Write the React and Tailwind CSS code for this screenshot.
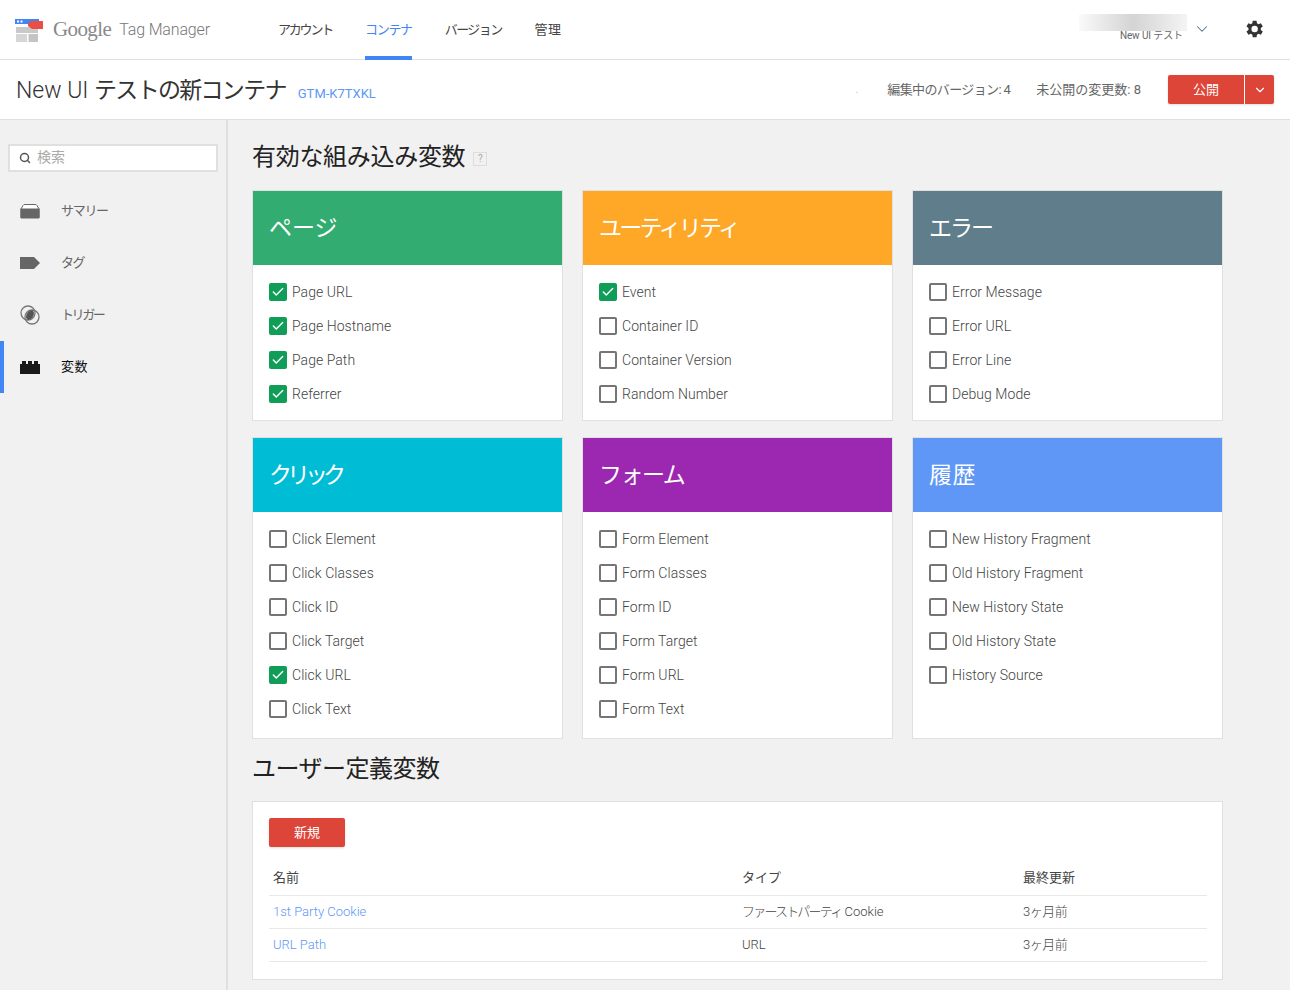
import React from "react";
import { Check, ChevronDown, Search } from "lucide-react";

const CARDS = [
  {
    title: "ページ",
    color: "bg-[#33ac71]",
    spacing: "tracking-[0px]",
    items: [
      ["Page URL", true],
      ["Page Hostname", true],
      ["Page Path", true],
      ["Referrer", true],
    ],
  },
  {
    title: "ユーティリティ",
    color: "bg-[#ffa726]",
    spacing: "tracking-[-2.700px]",
    items: [
      ["Event", true],
      ["Container ID", false],
      ["Container Version", false],
      ["Random Number", false],
    ],
  },
  {
    title: "エラー",
    color: "bg-[#607d8b]",
    spacing: "tracking-[-2px]",
    items: [
      ["Error Message", false],
      ["Error URL", false],
      ["Error Line", false],
      ["Debug Mode", false],
    ],
  },
  {
    title: "クリック",
    color: "bg-[#00bcd4]",
    spacing: "tracking-[-5px]",
    items: [
      ["Click Element", false],
      ["Click Classes", false],
      ["Click ID", false],
      ["Click Target", false],
      ["Click URL", true],
      ["Click Text", false],
    ],
  },
  {
    title: "フォーム",
    color: "bg-[#9c27b0]",
    spacing: "tracking-[-1.500px]",
    items: [
      ["Form Element", false],
      ["Form Classes", false],
      ["Form ID", false],
      ["Form Target", false],
      ["Form URL", false],
      ["Form Text", false],
    ],
  },
  {
    title: "履歴",
    color: "bg-[#5e97f6]",
    spacing: "tracking-[0.5px]",
    items: [
      ["New History Fragment", false],
      ["Old History Fragment", false],
      ["New History State", false],
      ["Old History State", false],
      ["History Source", false],
    ],
  },
];

const NAV = [
  { label: "アカウント", spacing: "tracking-[-2.200px]" },
  { label: "コンテナ", spacing: "tracking-[-1.300px]", active: true },
  { label: "バージョン", spacing: "tracking-[-1.600px]" },
  { label: "管理", spacing: "tracking-[0.500px]" },
];

function Logo() {
  return (
    <svg width="32" height="24" viewBox="0 0 32 24">
      <rect x="1" y="1" width="24" height="5" fill="#4285f4" />
      <rect x="3" y="2.5" width="2" height="2" fill="#fff" />
      <rect x="6.5" y="2.5" width="2" height="2" fill="#fff" />
      <rect x="2" y="9" width="22" height="6" fill="#c9c9c9" />
      <rect x="2" y="16" width="11" height="8" fill="#d6d6d6" />
      <rect x="14.5" y="16" width="9.5" height="8" fill="#c4c4c4" />
      <path d="M14 5 L17 2 H29 V10 H18 L14 7 Z" fill="#ea4f45" transform="translate(0 1)" />
    </svg>
  );
}

function Gear() {
  return (
    <svg width="22" height="22" viewBox="0 0 24 24" fill="#333">
      <path d="M19.4 13a7.6 7.6 0 0 0 0-2l2.2-1.7-2.1-3.6-2.6 1a7.6 7.6 0 0 0-1.7-1L14.8 2.9h-4.2L10.200 5.700a7.600 7.600 0 0 0-1.700 1l-2.600-1-2.100 3.600L6 11a7.600 7.600 0 0 0 0 2l-2.200 1.700 2.100 3.600 2.600-1a7.600 7.600 0 0 0 1.700 1l.4 2.800h4.200l.4-2.800a7.600 7.600 0 0 0 1.700-1l2.600 1 2.100-3.600zM12.700 15.500a3.500 3.500 0 1 1 0-7 3.500 3.500 0 0 1 0 7z" />
    </svg>
  );
}

const SIDE_ICONS = {
  summary: (
    <svg width="20" height="16" viewBox="0 0 20 16">
      <path d="M1 6 L3 2.500 Q3.500 1.500 5 1.500 H15 Q16.500 1.500 17 2.500 L19 6 V15 H1 Z" fill="#fff" stroke="#666" strokeWidth="1" />
      <rect x="0.500" y="5.500" width="19" height="9.500" fill="#666" />
    </svg>
  ),
  tag: (
    <svg width="20" height="14" viewBox="0 0 20 14">
      <path d="M0 1 H14 L20 7 L14 13 H0 Z" fill="#666" />
    </svg>
  ),
  trigger: (
    <svg width="20" height="20" viewBox="0 0 20 20">
      <circle cx="8" cy="8" r="7" fill="none" stroke="#777" strokeWidth="1.300" />
      <circle cx="12" cy="12" r="7" fill="none" stroke="#777" strokeWidth="1.300" />
      <path d="M6 12.500 A7 7 0 0 1 12.500 5 A7 7 0 0 1 14 8 A7 7 0 0 1 8 15 A7 7 0 0 1 6 12.500 Z" fill="#555" />
    </svg>
  ),
  variable: (
    <svg width="20" height="13" viewBox="0 0 20 13">
      <path d="M0 3 H2 V0 H6 V3 H8 V0 H12 V3 H14 V0 H18 V3 H20 V13 H0 Z" fill="#1a1a1a" />
    </svg>
  ),
};

function SideItem({ icon, label, spacing, active }) {
  return (
    <div className={`relative flex h-[52px] items-center pl-5 ${active ? "text-[#111]" : "text-[#666]"}`}>
      {active && <div className="absolute left-0 top-0 h-full w-1 bg-[#4285f4]" />}
      <div className="flex w-[41px] items-center">{SIDE_ICONS[icon]}</div>
      <span className={`text-[13px] ${spacing}`}>{label}</span>
    </div>
  );
}

function Row({ label, checked }) {
  return (
    <div className="flex h-[34px] items-center">
      {checked ? (
        <div className="flex h-[18px] w-[18px] items-center justify-center rounded-[2px] bg-[#0f9d58]">
          <Check size={14} strokeWidth={2.5} className="text-white" />
        </div>
      ) : (
        <div className="h-[18px] w-[18px] rounded-[2px] border-2 border-[#757575]" />
      )}
      <span className="ml-[5px] text-[14px] font-light tracking-[0.05px] text-[#444]">{label}</span>
    </div>
  );
}

function VarCard({ card, tall }) {
  return (
    <div className="border border-[#e0e0e0] bg-white">
      <div className={`flex h-[74px] items-center px-4 pt-[2px] text-[23px] text-white ${card.color} ${card.spacing}`}>
        {card.title}
      </div>
      <div className={`px-4 pt-[10px] ${tall ? "pb-[12px]" : "pb-[9px]"}`}>
        {card.items.map(([label, checked]) => (
          <Row key={label} label={label} checked={checked} />
        ))}
      </div>
    </div>
  );
}

export default function App() {
  return (
    <div className="flex h-[990px] flex-col overflow-hidden bg-[#f1f1f1] font-['Roboto','Noto_Sans_CJK_JP',sans-serif]">
      {/* Top nav */}
      <div className="flex h-[60px] items-stretch border-b border-[#e0e0e0] bg-white">
        <div className="flex w-[278px] items-center pl-[14px]">
          <Logo />
          <span className="ml-[7px] font-['Liberation_Serif',serif] text-[21px] tracking-[-0.6px] text-[#8a8a8a]">Google</span>
          <span className="ml-2 text-[16px] font-light tracking-[-0.15px] text-[#777]">Tag Manager</span>
        </div>
        <div className="-mb-px flex gap-[33px]">
          {NAV.map((n) => (
            <div
              key={n.label}
              className={`flex items-center border-b-4 pt-1 text-[13px] ${n.spacing} ${
                n.active ? "border-[#4285f4] text-[#4285f4]" : "border-transparent text-[#444]"
              }`}
            >
              {n.label}
            </div>
          ))}
        </div>
        <div className="ml-auto flex items-start">
          <div className="mt-[14px] flex w-[108px] flex-col">
            <div className="h-[17px] bg-gradient-to-r from-[#fafafa] via-[#d4d4d4] to-[#f4f4f4]" />
            <div className="-mt-[2px] pr-[4px] text-right text-[10px] leading-[14px] tracking-[-0.1px] text-[#666]">New UI テスト</div>
          </div>
          <ChevronDown size={18} strokeWidth={1.4} className="ml-[6px] mt-[20px] text-[#4f6f8a]" />
          <div className="ml-[32px] mr-[25px] mt-[18px]">
            <Gear />
          </div>
        </div>
      </div>

      {/* Container bar */}
      <div className="flex h-[60px] items-center border-b border-[#e0e0e0] bg-white pl-4 pr-4">
        <span className="mt-1 text-[23px] font-light text-[#333]">
          New UI <span className="font-normal tracking-[-1.700px]">テストの新コンテナ</span>
        </span>
        <span className="ml-3 mt-2 text-[13px] text-[#5e97f6]">GTM-K7TXKL</span>
        <div className="ml-auto flex items-center text-[13px] text-[#666]">
          <span className="mr-[29px] text-[10px] leading-none text-[#bbb]">.</span>
          <span className="tracking-[-0.62px]">編集中のバージョン: 4</span>
          <span className="ml-[26px]">未公開の変更数: 8</span>
          <div className="ml-[27px] flex h-[29px] overflow-hidden rounded-[2px] bg-[#dd4539] text-white shadow-sm">
            <div className="flex w-[76px] items-center justify-center text-[13px]">公開</div>
            <div className="flex w-[30px] items-center justify-center border-l border-white">
              <ChevronDown size={14} />
            </div>
          </div>
        </div>
      </div>

      <div className="flex flex-1">
        {/* Sidebar */}
        <div className="w-[228px] shrink-0 border-r-2 border-[#e0e0e0]">
          <div className="mx-2 mt-[24px] flex h-[28px] w-[210px] items-center border-2 border-[#e0e0e0] bg-white pl-[9px]">
            <Search size={12} strokeWidth={3} className="text-[#555]" />
            <span className="ml-[6px] -mt-[2px] text-[14px] text-[#aaa]">検索</span>
          </div>
          <div className="mt-[13px]">
            <SideItem icon="summary" label="サマリー" spacing="tracking-[-1.300px]" />
            <SideItem icon="tag" label="タグ" spacing="tracking-[-1.500px]" />
            <SideItem icon="trigger" label="トリガー" spacing="tracking-[-2.400px]" />
            <SideItem icon="variable" label="変数" spacing="tracking-[0.500px]" active />
          </div>
        </div>

        {/* Main */}
        <div className="w-[995px] pl-6">
          <div className="flex h-[70px] items-center pt-1">
            <h1 className="text-[24px] font-normal tracking-[-0.3px] text-[#222]">有効な組み込み変数</h1>
            <span className="ml-2 mt-1 flex h-[14px] w-[14px] items-center justify-center border border-[#ddd] text-[10px] leading-none text-[#aaa]">?</span>
          </div>
          <div className="grid grid-cols-3 gap-x-[19px] gap-y-4">
            {CARDS.map((c, i) => (
              <VarCard key={c.title} card={c} tall={i > 2} />
            ))}
          </div>
          <h2 className="flex h-[62px] items-center pb-[2px] text-[24px] font-normal tracking-[-0.5px] text-[#222]">ユーザー定義変数</h2>
          <div className="border border-[#e0e0e0] bg-white pb-[17px] pl-4 pr-[15px] pt-4">
            <button className="h-[29px] w-[76px] rounded-[2px] bg-[#dd4539] text-[13px] text-white shadow-sm">新規</button>
            <table className="mt-[14px] w-full text-[13px] text-[#444]">
              <thead>
                <tr className="h-[34px] border-b border-[#e8e8e8] text-left">
                  <th className="w-[473px] pl-1 font-normal">名前</th>
                  <th className="w-[281px] font-normal">タイプ</th>
                  <th className="font-normal">最終更新</th>
                </tr>
              </thead>
              <tbody>
                <tr className="h-[33px] border-b border-[#e8e8e8]">
                  <td className="pl-1 font-light text-[#5e97f6]">1st Party Cookie</td>
                  <td className="font-light">
                    <span className="tracking-[-1.800px]">ファーストパーティ</span> Cookie
                  </td>
                  <td className="font-light tracking-[-0.5px]">3ヶ月前</td>
                </tr>
                <tr className="h-[33px] border-b border-[#e8e8e8]">
                  <td className="pl-1 font-light text-[#5e97f6]">URL Path</td>
                  <td className="font-light">URL</td>
                  <td className="font-light tracking-[-0.5px]">3ヶ月前</td>
                </tr>
              </tbody>
            </table>
          </div>
        </div>
      </div>
    </div>
  );
}
